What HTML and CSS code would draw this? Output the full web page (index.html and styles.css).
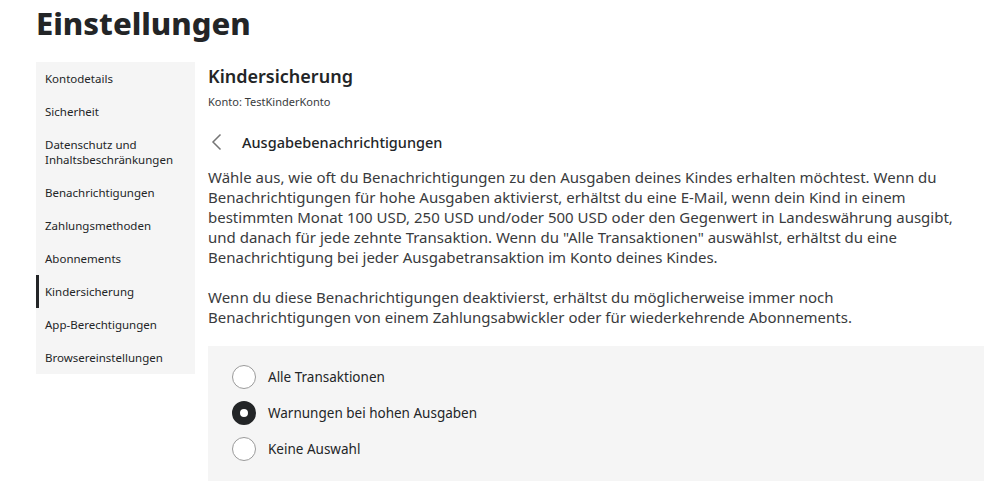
FILE: index.html
```html
<!DOCTYPE html>
<html>
<head>
    <title>Einstellungen</title>
    <link rel="stylesheet" href="styles.css">
</head>
<body>
    <h1 class="page-title">Einstellungen</h1>
    <div class="layout">
        <ul class="side-menu">
            <li>Kontodetails</li>
            <li>Sicherheit</li>
            <li>Datenschutz und<br>Inhaltsbeschränkungen</li>
            <li>Benachrichtigungen</li>
            <li>Zahlungsmethoden</li>
            <li>Abonnements</li>
            <li class="active">Kindersicherung</li>
            <li>App-Berechtigungen</li>
            <li>Browsereinstellungen</li>
        </ul>
        <div class="content">
            <h2 class="section-title">Kindersicherung</h2>
            <div class="account">Konto: TestKinderKonto</div>
            <div class="back-row">
                <svg class="back-icon" width="12" height="18" viewBox="0 0 12 18">
                    <path d="M9.5 1.5 L2 9 L9.5 16.5" fill="none" stroke="#757575" stroke-width="1.5"/>
                </svg>
                <span>Ausgabebenachrichtigungen</span>
            </div>
            <p class="text">Wähle aus, wie oft du Benachrichtigungen zu den Ausgaben deines Kindes erhalten möchtest. Wenn du Benachrichtigungen für hohe Ausgaben aktivierst, erhältst du eine E-Mail, wenn dein Kind in einem bestimmten Monat 100 USD, 250 USD und/oder 500 USD oder den Gegenwert in Landeswährung ausgibt, und danach für jede zehnte Transaktion. Wenn du "Alle Transaktionen" auswählst, erhältst du eine Benachrichtigung bei jeder Ausgabetransaktion im Konto deines Kindes.</p>
            <p class="text">Wenn du diese Benachrichtigungen deaktivierst, erhältst du möglicherweise immer noch Benachrichtigungen von einem Zahlungsabwickler oder für wiederkehrende Abonnements.</p>
            <div class="options">
                <div class="option"><span class="radio"></span>Alle Transaktionen</div>
                <div class="option"><span class="radio checked"></span>Warnungen bei hohen Ausgaben</div>
                <div class="option"><span class="radio"></span>Keine Auswahl</div>
            </div>
        </div>
    </div>
</body>
</html>
```

FILE: styles.css
```css
body {
    font-family: "Noto Sans", Arial, sans-serif;
    color: #232527;
    background-color: #fff;
    margin: 0;
    padding: 0 18px 0 36px;
}
.page-title {
    font-size: 31px;
    font-weight: 800;
    margin: 0;
    padding-top: 2px;
    line-height: 42px;
}
.layout {
    display: flex;
    gap: 13px;
    margin-top: 18px;
}
.side-menu {
    list-style: none;
    margin: 0;
    padding: 0;
    width: 159px;
    flex: none;
    background-color: #f5f5f5;
    align-self: flex-start;
}
.side-menu li {
    font-size: 11.5px;
    line-height: 15px;
    padding: 9px 9px 9px 6px;
    border-left: 3px solid transparent;
}
.side-menu li.active {
    border-left-color: #232527;
}
.content {
    flex: 1;
}
.section-title {
    font-size: 18px;
    font-weight: 600;
    margin: 2px 0 0;
    line-height: 24px;
}
.account {
    font-size: 11px;
    margin-top: 6px;
    color: #393b3d;
}
.back-row {
    display: flex;
    align-items: center;
    gap: 19px;
    margin-top: 23px;
    padding-left: 3px;
    font-size: 14.5px;
    font-weight: 500;
}
.text {
    font-size: 15px;
    line-height: 20px;
    margin: 15px 0 0;
    max-width: 765px;
    color: #393b3d;
}
.text + .text {
    margin-top: 20px;
}
.options {
    background-color: #f5f5f5;
    margin-top: 19px;
    padding: 19px 24px 20px;
    display: flex;
    flex-direction: column;
    gap: 12px;
}
.option {
    display: flex;
    align-items: center;
    gap: 12px;
    font-size: 13.5px;
    height: 24px;
}
.radio {
    width: 24px;
    height: 24px;
    box-sizing: border-box;
    border-radius: 50%;
    border: 1px solid #9a9a9a;
    background-color: #fff;
}
.radio.checked {
    border: 8px solid #232527;
}
```
